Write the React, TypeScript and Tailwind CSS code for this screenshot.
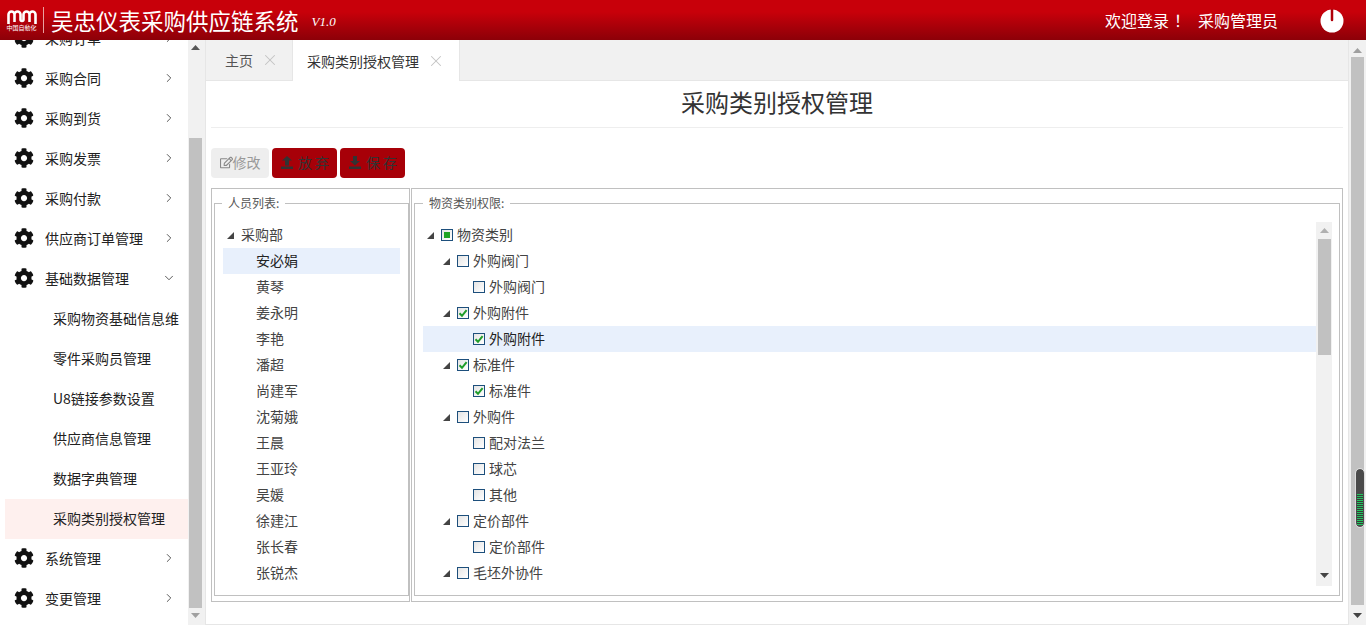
import { FaCog, FaRegEdit } from "react-icons/fa";
import { ChevronDown, ChevronRight, X } from "lucide-react";

const FONT = "font-['Noto_Sans_CJK_SC','Liberation_Sans',sans-serif]";

const topMenu = ["采购订单", "采购合同", "采购到货", "采购发票", "采购付款", "供应商订单管理"];
const subMenu = ["采购物资基础信息维", "零件采购员管理", "U8链接参数设置", "供应商信息管理", "数据字典管理", "采购类别授权管理"];
const people = ["安必娟", "黄琴", "姜永明", "李艳", "潘超", "尚建军", "沈菊娥", "王晨", "王亚玲", "吴媛", "徐建江", "张长春", "张锐杰"];

type Check = "none" | "checked" | "partial";
interface TreeRow {
  label: string;
  level: number;
  check: Check;
  active?: boolean;
}

const categories: TreeRow[] = [
  { label: "物资类别", level: 0, check: "partial" },
  { label: "外购阀门", level: 1, check: "none" },
  { label: "外购阀门", level: 2, check: "none" },
  { label: "外购附件", level: 1, check: "checked" },
  { label: "外购附件", level: 2, check: "checked", active: true },
  { label: "标准件", level: 1, check: "checked" },
  { label: "标准件", level: 2, check: "checked" },
  { label: "外购件", level: 1, check: "none" },
  { label: "配对法兰", level: 2, check: "none" },
  { label: "球芯", level: 2, check: "none" },
  { label: "其他", level: 2, check: "none" },
  { label: "定价部件", level: 1, check: "none" },
  { label: "定价部件", level: 2, check: "none" },
  { label: "毛坯外协件", level: 1, check: "none" },
];

function Arrow({ dir, className }: { dir: "up" | "down"; className: string }) {
  return (
    <svg width="9" height="5" viewBox="0 0 9 5" className={className}>
      <path d={dir === "up" ? "M4.5 0L9 5H0z" : "M0 0h9L4.5 5z"} fill="currentColor" />
    </svg>
  );
}

function TreeToggle() {
  return (
    <svg width="7" height="7" viewBox="0 0 7 7" className="shrink-0">
      <path d="M7 0v7H0z" fill="#444" />
    </svg>
  );
}

function CheckBox({ state }: { state: Check }) {
  return (
    <span className="w-3 h-3 shrink-0 border border-[#1d4f7c] bg-gradient-to-br from-[#e4e4e4] to-white flex items-center justify-center">
      {state === "partial" && <span className="w-1.5 h-1.5 bg-[#1fa324]" />}
      {state === "checked" && (
        <svg width="10" height="10" viewBox="0 0 10 10">
          <path d="M1.5 5.2L4 7.8L8.6 2.2" fill="none" stroke="#1f9d2a" strokeWidth="2" />
        </svg>
      )}
    </span>
  );
}

function SideItem({ label, open }: { label: string; open?: boolean }) {
  return (
    <div className="h-10 flex items-center pl-[14px] pr-3 pb-0.5 text-sm text-[#222]">
      <FaCog className="w-5 h-5 text-[#111] shrink-0" />
      <span className="ml-[11px] flex-1">{label}</span>
      {open ? (
        <ChevronDown className="w-3.5 h-3.5 text-[#444]" strokeWidth={1.5} />
      ) : (
        <ChevronRight className="w-3.5 h-3.5 text-[#444]" strokeWidth={1.5} />
      )}
    </div>
  );
}

function Sidebar() {
  return (
    <aside className="w-[188px] shrink-0 overflow-hidden bg-white">
      <div className="-mt-[21px]">
        {topMenu.map((m) => (
          <SideItem key={m} label={m} />
        ))}
        <SideItem label="基础数据管理" open />
        {subMenu.map((m, i) => (
          <div
            key={m}
            className={`h-10 ml-[5px] pl-[48px] pb-0.5 flex items-center text-sm whitespace-nowrap overflow-hidden text-[#222] ${
              i === subMenu.length - 1 ? "bg-[#fef0ee]" : ""
            }`}
          >
            {m}
          </div>
        ))}
        <SideItem label="系统管理" />
        <SideItem label="变更管理" />
      </div>
    </aside>
  );
}

function UploadIcon({ down }: { down?: boolean }) {
  return (
    <svg width="14" height="14" viewBox="0 0 14 14" className="shrink-0">
      <path d={down ? "M5 1h4v5h3L7 10.5 2 6h3z" : "M7 1l5 4.5H9v5H5v-5H2z"} fill="#333" />
      <path d="M1 11.5h12V14H1z" fill="#333" />
    </svg>
  );
}

function TreeLine({ row }: { row: TreeRow }) {
  const pad = row.level === 0 ? "pl-1" : row.level === 1 ? "pl-5" : "pl-[50px]";
  return (
    <div className={`h-[26px] flex items-center gap-[7px] ${pad} ${row.active ? "bg-[#e8f0fc] text-[#222]" : ""}`}>
      {row.level < 2 && <TreeToggle />}
      <span className="flex items-center gap-1">
        <CheckBox state={row.check} />
        <span className="pb-0.5">{row.label}</span>
      </span>
    </div>
  );
}

function Main() {
  return (
    <main className="flex-1 min-w-0 flex flex-col border-l border-b border-[#e6e6e6] bg-white">
      <div className="h-[41px] shrink-0 flex bg-[#f1f1f1] border-b border-[#e6e6e6]">
        <div className="w-[87px] flex items-center pl-[19px] text-sm text-[#555] border-r border-[#e6e6e6]">
          主页
          <X className="ml-2 w-[18px] h-[18px] text-[#c4c4c4]" strokeWidth={1.4} />
        </div>
        <div className="w-[167px] h-[41px] flex items-center pl-[14px] text-sm text-[#333] bg-white border-r border-[#e6e6e6]">
          采购类别授权管理
          <X className="ml-2 w-[18px] h-[18px] text-[#c4c4c4]" strokeWidth={1.4} />
        </div>
      </div>
      <div className="px-[5px]">
        <div className="h-[47px] pb-1 flex items-center justify-center text-2xl text-[#333] border-b border-[#eee]">采购类别授权管理</div>
        <div className="mt-5 flex gap-[3px]">
          <button className="w-[58px] h-[30px] pb-0.5 rounded bg-[#eeeeee] text-[#999] text-sm flex items-center justify-center">
            <FaRegEdit className="w-[13px] h-[13px] text-[#888]" />
            修改
          </button>
          <button className="w-[65px] h-[30px] pb-0.5 rounded bg-[#a70008] text-[#333] text-sm flex items-center justify-center gap-1">
            <UploadIcon />放 弃
          </button>
          <button className="w-[65px] h-[30px] pb-0.5 rounded bg-[#a70008] text-[#333] text-sm flex items-center justify-center gap-1">
            <UploadIcon down />保 存
          </button>
        </div>
        <div className="mt-2.5 flex h-[414px] w-[1132px]">
          <div className="w-[199px] shrink-0 border border-[#c0c0c0] px-0.5 pt-[5px]">
            <fieldset className="h-[402px] border border-[#c0c0c0] px-2">
              <legend className="-ml-px px-1.5 text-xs leading-[18px] text-[#555]">人员列表:</legend>
              <div className="mt-[10px] h-[364px] overflow-hidden text-sm text-[#444]">
                <div className="h-[26px] flex items-center pl-1 gap-[7px]">
                  <TreeToggle />
                  <span className="pb-0.5">采购部</span>
                </div>
                {people.map((p, i) => (
                  <div key={p} className={`h-[26px] pb-0.5 flex items-center pl-[33px] w-[177px] ${i === 0 ? "bg-[#e8f0fc] text-[#222]" : ""}`}>
                    {p}
                  </div>
                ))}
              </div>
            </fieldset>
          </div>
          <div className="flex-1 ml-px border border-[#c0c0c0] px-0.5 pt-[5px]">
            <fieldset className="h-[402px] border border-[#c0c0c0] pl-2 pr-[7px]">
              <legend className="px-1.5 text-xs leading-[18px] text-[#555]">物资类别权限:</legend>
              <div className="mt-[10px] h-[364px] flex">
                <div className="flex-1 overflow-hidden text-sm text-[#444]">
                  {categories.map((c, i) => (
                    <TreeLine key={i} row={c} />
                  ))}
                </div>
                <div className="w-4 shrink-0 bg-[#f1f1f1] flex flex-col items-center">
                  <Arrow dir="up" className="mt-1.5 text-[#b0b0b0]" />
                  <div className="mt-[6px] w-[13px] h-[116px] bg-[#c1c1c1]" />
                  <div className="flex-1" />
                  <Arrow dir="down" className="mb-2 text-[#444]" />
                </div>
              </div>
            </fieldset>
          </div>
        </div>
      </div>
    </main>
  );
}

export default function App() {
  return (
    <div className={`w-[1366px] h-[625px] overflow-hidden flex flex-col bg-white ${FONT}`}>
      <header className="h-10 shrink-0 flex items-center bg-gradient-to-b from-[#c8000a] from-30% to-[#8c0008] text-white">
        <div className="w-[43px] flex flex-col items-center">
          <svg width="30" height="15" viewBox="0 0 30 15">
            <path
              d="M1.5 15V5.5a3 3 0 0 1 6 0V13M7.5 5.5a3 3 0 0 1 6 0v5a1.5 1.5 0 0 0 3 0v-5a3 3 0 0 1 6 0V13M22.5 5.5a3 3 0 0 1 6 0V15"
              fill="none"
              stroke="white"
              strokeWidth="2.6"
            />
          </svg>
          <span className="text-[6px] leading-[8px] text-white whitespace-nowrap">中国自動化</span>
        </div>
        <div className="w-px h-[26px] bg-[#e8a0a0]" />
        <h1 className="ml-[7px] text-[22.5px] leading-none whitespace-nowrap">吴忠仪表采购供应链系统</h1>
        <span className="ml-[13px] mt-1 text-[13px] italic font-['Liberation_Serif',serif]">V1.0</span>
        <div className="flex-1" />
        <span className="text-base whitespace-nowrap">欢迎登录</span>
        <span className="ml-[5px] text-base">！</span>
        <span className="ml-2 text-base whitespace-nowrap">采购管理员</span>
        <svg width="24" height="24" viewBox="0 0 24 24" className="ml-[42px] mr-[22px] mt-0.5">
          <circle cx="12" cy="12" r="11.5" fill="white" />
          <path d="M12 0v11" stroke="#b0000a" strokeWidth="2.5" strokeLinecap="round" />
        </svg>
      </header>
      <div className="flex-1 min-h-0 flex">
        <Sidebar />
        <div className="w-[17px] shrink-0 bg-[#f1f1f1] pr-0.5 flex flex-col items-center">
          <Arrow dir="up" className="mt-[5px] text-[#555]" />
          <div className="mt-[88px] w-[13px] h-[470px] bg-[#c1c1c1]" />
          <Arrow dir="down" className="mt-[5px] text-[#a0a0a0]" />
        </div>
        <Main />
        <div className="relative w-[18px] shrink-0 bg-[#f1f1f1] border-l border-[#e6e6e6] flex flex-col items-center">
          <Arrow dir="up" className="mt-[8px] text-[#a0a0a0]" />
          <div className="mt-[4px] w-[13px] h-[548px] bg-[#c1c1c1]" />
          <Arrow dir="down" className="mt-[8px] text-[#444]" />
          <div className="absolute top-[429px] left-[7px] w-2 h-[58px] rounded-full bg-[#4a4a4a] outline outline-1 outline-[#ddd] flex flex-col justify-end overflow-hidden pb-0.5">
            <div className="h-[31px] w-1.5 mx-px bg-[repeating-linear-gradient(to_bottom,#22c55e_0px,#22c55e_1px,#3a3a3a_1px,#3a3a3a_2px)]" />
          </div>
        </div>
      </div>
    </div>
  );
}
